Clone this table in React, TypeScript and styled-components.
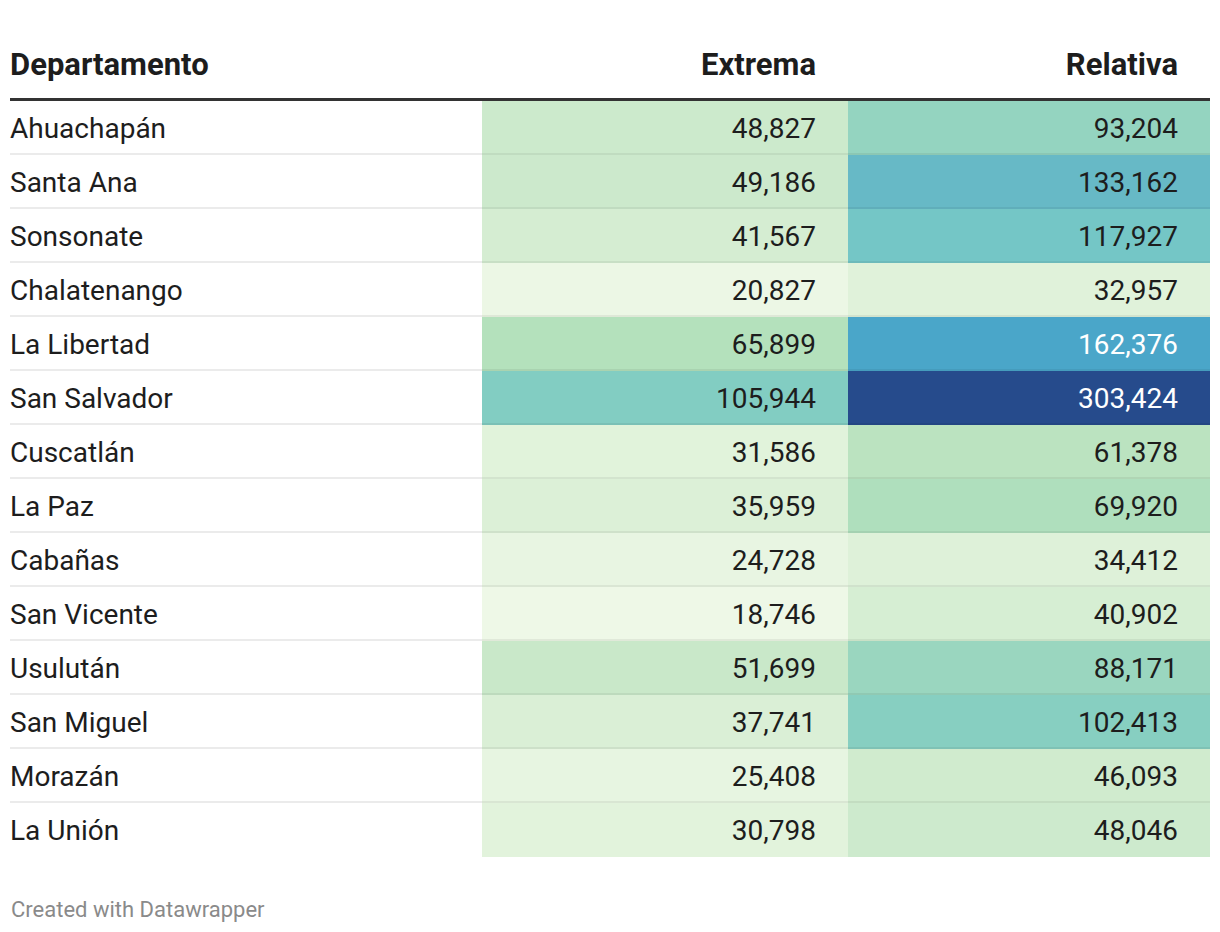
import styled, { createGlobalStyle } from "styled-components";

const GlobalStyle = createGlobalStyle`
  html, body {
    margin: 0;
    padding: 0;
    background: #ffffff;
  }
  body {
    font-family: Roboto, "Liberation Sans", sans-serif;
    color: #1d1d1d;
  }
`;

type Row = { name: string; extrema: number; relativa: number };

const rows: Row[] = [
  { name: "Ahuachapán", extrema: 48827, relativa: 93204 },
  { name: "Santa Ana", extrema: 49186, relativa: 133162 },
  { name: "Sonsonate", extrema: 41567, relativa: 117927 },
  { name: "Chalatenango", extrema: 20827, relativa: 32957 },
  { name: "La Libertad", extrema: 65899, relativa: 162376 },
  { name: "San Salvador", extrema: 105944, relativa: 303424 },
  { name: "Cuscatlán", extrema: 31586, relativa: 61378 },
  { name: "La Paz", extrema: 35959, relativa: 69920 },
  { name: "Cabañas", extrema: 24728, relativa: 34412 },
  { name: "San Vicente", extrema: 18746, relativa: 40902 },
  { name: "Usulután", extrema: 51699, relativa: 88171 },
  { name: "San Miguel", extrema: 37741, relativa: 102413 },
  { name: "Morazán", extrema: 25408, relativa: 46093 },
  { name: "La Unión", extrema: 30798, relativa: 48046 },
];

// colour stops sampled from the chart's scale
const stops: [number, string][] = [
  [18746, "#eef8e7"],
  [32957, "#e0f2da"],
  [50000, "#cbe9cb"],
  [65899, "#b4e1bc"],
  [93204, "#94d4c0"],
  [105944, "#82cdc2"],
  [117927, "#74c6c6"],
  [133162, "#67b9c6"],
  [162376, "#4aa6c9"],
  [303424, "#264b8c"],
];

const hex = (c: string) => [1, 3, 5].map((i) => parseInt(c.slice(i, i + 2), 16));

function colorFor(v: number): string {
  if (v <= stops[0][0]) return stops[0][1];
  for (let i = 1; i < stops.length; i++) {
    const [v1, c1] = stops[i];
    if (v <= v1) {
      const [v0, c0] = stops[i - 1];
      const t = (v - v0) / (v1 - v0);
      const a = hex(c0);
      const b = hex(c1);
      const mix = a.map((x, k) => Math.round(x + (b[k] - x) * t));
      return `rgb(${mix.join(",")})`;
    }
  }
  return stops[stops.length - 1][1];
}

const fmt = (n: number) => n.toLocaleString("en-US");

const Page = styled.div`
  padding: 40px 10px 0;
`;

const Table = styled.div`
  display: grid;
  grid-template-columns: 472px 366px 362px;
`;

const HeadCell = styled.div<{ $right?: boolean }>`
  font-size: 31px;
  font-weight: 700;
  color: #1d1d1d;
  padding: 6px ${(p) => (p.$right ? "32px" : "0")} 15px 0;
  text-align: ${(p) => (p.$right ? "right" : "left")};
  border-bottom: 3px solid #333333;
`;

const NameCell = styled.div<{ $last?: boolean }>`
  font-size: 28px;
  height: 54px;
  box-sizing: border-box;
  padding-top: 2px;
  display: flex;
  align-items: center;
  border-bottom: 2px solid ${(p) => (p.$last ? "transparent" : "#ebebeb")};
`;

const ValueCell = styled.div<{ $bg: string; $dark: boolean; $last?: boolean }>`
  font-size: 28px;
  font-variant-numeric: tabular-nums;
  height: 54px;
  box-sizing: border-box;
  padding: 2px 32px 0 0;
  display: flex;
  align-items: center;
  justify-content: flex-end;
  background: ${(p) => p.$bg};
  color: ${(p) => (p.$dark ? "#ffffff" : "#1d1d1d")};
  border-bottom: 2px solid ${(p) => (p.$last ? "transparent" : "rgba(0, 0, 0, 0.06)")};
`;

const Footer = styled.div`
  margin-top: 40px;
  padding-left: 1px;
  font-size: 22px;
  color: #8a8a8a;
`;

export default function App() {
  return (
    <Page>
      <GlobalStyle />
      <Table>
        <HeadCell>Departamento</HeadCell>
        <HeadCell $right>Extrema</HeadCell>
        <HeadCell $right>Relativa</HeadCell>
        {rows.map((r, i) => {
          const last = i === rows.length - 1;
          return [
            <NameCell key={r.name + "n"} $last={last}>
              {r.name}
            </NameCell>,
            <ValueCell
              key={r.name + "e"}
              $bg={colorFor(r.extrema)}
              $dark={r.extrema > 150000}
              $last={last}
            >
              {fmt(r.extrema)}
            </ValueCell>,
            <ValueCell
              key={r.name + "r"}
              $bg={colorFor(r.relativa)}
              $dark={r.relativa > 150000}
              $last={last}
            >
              {fmt(r.relativa)}
            </ValueCell>,
          ];
        })}
      </Table>
      <Footer>Created with Datawrapper</Footer>
    </Page>
  );
}
